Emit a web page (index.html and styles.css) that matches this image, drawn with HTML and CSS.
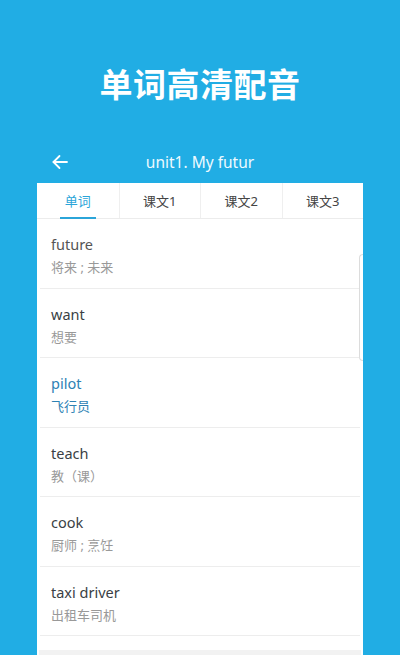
FILE: index.html
```html
<!DOCTYPE html>
<html lang="zh">
<head>
<meta charset="utf-8">
<title>单词高清配音</title>
<link rel="stylesheet" href="styles.css">
</head>
<body>
<div class="screen">
  <header class="hero">
    <h1 class="hero-title">单词高清配音</h1>
  </header>
  <nav class="nav">
    <span class="nav-back">
      <svg width="18" height="18" viewBox="0 0 18 18" fill="none" stroke="#fff" stroke-width="1.8" stroke-linecap="round" stroke-linejoin="round">
        <path d="M16 9H2.5"/>
        <path d="M8.5 3L2.5 9l6 6"/>
      </svg>
    </span>
    <span class="nav-title">unit1. My futur</span>
    <span></span>
  </nav>
  <main class="card">
    <div class="tabs">
      <div class="tab active"><span class="tab-label">单词</span></div>
      <div class="tab"><span class="tab-label">课文1</span></div>
      <div class="tab"><span class="tab-label">课文2</span></div>
      <div class="tab"><span class="tab-label">课文3</span></div>
    </div>
    <ul class="list">
      <li class="row faded"><div class="word">future</div><div class="meaning">将来 ; 未来</div></li>
      <li class="row"><div class="word">want</div><div class="meaning">想要</div></li>
      <li class="row current"><div class="word">pilot</div><div class="meaning">飞行员</div></li>
      <li class="row"><div class="word">teach</div><div class="meaning">教（课）</div></li>
      <li class="row"><div class="word">cook</div><div class="meaning">厨师 ; 烹饪</div></li>
      <li class="row"><div class="word">taxi driver</div><div class="meaning">出租车司机</div></li>
    </ul>
    <div class="card-foot"></div>
    <div class="side-handle"></div>
  </main>
</div>
</body>
</html>
```

FILE: styles.css
```css
html, body {
  margin: 0;
  padding: 0;
}
body {
  background: #21ade4;
  font-family: "Noto Sans", "Noto Sans CJK SC", sans-serif;
  overflow: hidden;
}
.screen {
  width: 400px;
  height: 655px;
  overflow: hidden;
  display: flex;
  flex-direction: column;
}
.hero {
  flex-shrink: 0;
  height: 140px;
  box-sizing: border-box;
  padding-top: 59px;
  text-align: center;
}
.hero-title {
  margin: 0;
  font-family: "Noto Sans CJK SC", sans-serif;
  font-size: 33px;
  line-height: 48px;
  font-weight: 700;
  color: #fff;
  letter-spacing: 0.5px;
}
.nav {
  flex-shrink: 0;
  height: 43px;
  display: grid;
  grid-template-columns: 1fr auto 1fr;
  align-items: center;
}
.nav-back {
  padding-left: 51px;
  display: flex;
  align-items: center;
}
.nav-title {
  color: #eefaff;
  font-size: 15.5px;
  line-height: 22px;
}
.card {
  position: relative;
  margin: 0 37px;
  background: #fff;
  flex: 1 0 auto;
}
.tabs {
  display: grid;
  grid-template-columns: repeat(4, 1fr);
  height: 36px;
  border-bottom: 1px solid #ececec;
  box-sizing: border-box;
}
.tab {
  display: flex;
  align-items: center;
  justify-content: center;
  position: relative;
  font-size: 13px;
  color: #444;
}
.tab + .tab {
  border-left: 1px solid #efefef;
}
.tab.active {
  color: #2ba5d9;
}
.tab.active::after {
  content: "";
  position: absolute;
  bottom: -1px;
  left: 50%;
  width: 36px;
  margin-left: -18px;
  height: 2px;
  background: #2ba5d9;
}
.list {
  list-style: none;
  margin: 0;
  padding: 0 3px;
}
.row {
  height: 69.5px;
  box-sizing: border-box;
  padding: 14px 0 0 11px;
  border-bottom: 1px solid #ededed;
}
.word {
  font-size: 14.5px;
  line-height: 22px;
  color: #3a3f45;
}
.meaning {
  font-size: 13px;
  line-height: 24px;
  color: #999;
}
.row.faded .word {
  color: #555;
}
.row.current .word,
.row.current .meaning {
  color: #2d82b4;
}
.card-foot {
  margin: 14px 2px 0;
  height: 20px;
  background: #f2f2f2;
}
.side-handle {
  position: absolute;
  right: 0;
  top: 71px;
  width: 3px;
  height: 105px;
  border: 1px solid #dcdcdc;
  border-right: none;
  border-radius: 4px 0 0 4px;
  background: #fff;
}
```
